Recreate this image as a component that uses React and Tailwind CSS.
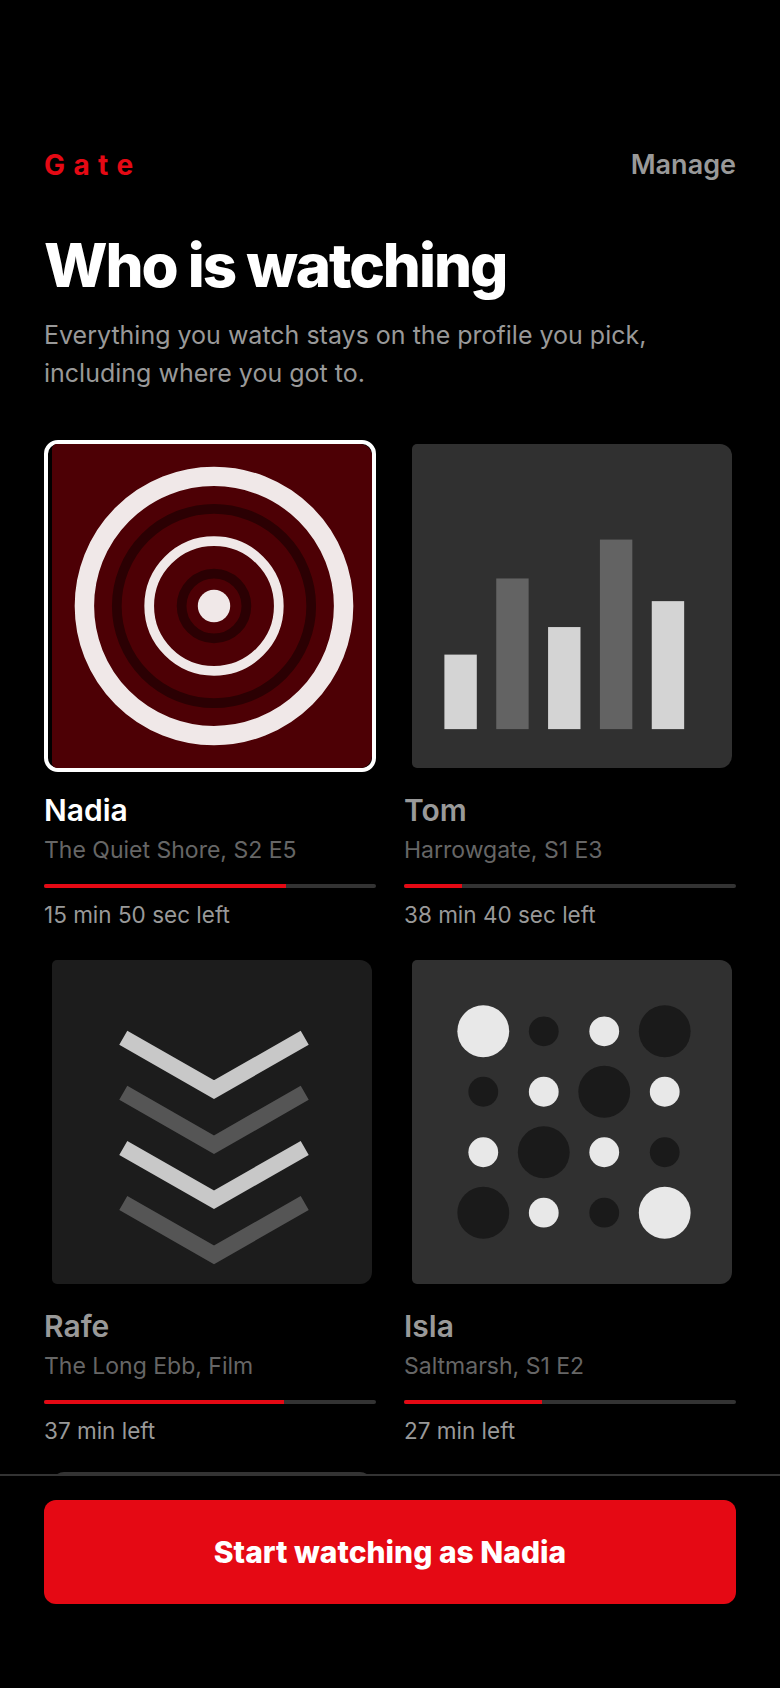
const profiles = [
  { name: 'Nadia', show: 'The Quiet Shore, S2 E5', left: '15 min 50 sec left', pct: '72.8%', art: 'rings', selected: true },
  { name: 'Tom', show: 'Harrowgate, S1 E3', left: '38 min 40 sec left', pct: '17.4%', art: 'bars' },
  { name: 'Rafe', show: 'The Long Ebb, Film', left: '37 min left', pct: '72.4%', art: 'chevrons' },
  { name: 'Isla', show: 'Saltmarsh, S1 E2', left: '27 min left', pct: '41.6%', art: 'dots' },
];

const Rings = () => (
  <svg viewBox="0 0 200 200" className="block w-[324px] h-[324px] bg-[#4d0005]" fill="none">
    <circle cx="100" cy="100" r="80" stroke="#f0e8e8" strokeWidth="12" />
    <circle cx="100" cy="100" r="60" stroke="#2b0003" strokeWidth="6" />
    <circle cx="100" cy="100" r="40" stroke="#f0e8e8" strokeWidth="6" />
    <circle cx="100" cy="100" r="20" stroke="#2b0003" strokeWidth="6" />
    <circle cx="100" cy="100" r="10" fill="#f0e8e8" />
  </svg>
);

const Bars = () => (
  <svg viewBox="0 0 200 200" className="block w-[324px] h-[324px] bg-[#303030]">
    <rect x="20" y="130" width="20" height="46" fill="#d4d4d4" />
    <rect x="52" y="83" width="20" height="93" fill="#636363" />
    <rect x="84" y="113" width="20" height="63" fill="#d4d4d4" />
    <rect x="116" y="59" width="20" height="117" fill="#636363" />
    <rect x="148" y="97" width="20" height="79" fill="#d4d4d4" />
  </svg>
);

const Chevrons = () => (
  <svg viewBox="0 0 200 200" className="block w-[324px] h-[324px] bg-[#1c1c1c]" fill="none" strokeWidth="10">
    <path d="M44 48 L100 80 L156 48" stroke="#c8c8c8" />
    <path d="M44 82 L100 114 L156 82" stroke="#555555" />
    <path d="M44 116 L100 148 L156 116" stroke="#c8c8c8" />
    <path d="M44 150 L100 182 L156 150" stroke="#555555" />
  </svg>
);

// [light?, big?] per cell, four by four
const dots = [
  [[1, 1], [0, 0], [1, 0], [0, 1]],
  [[0, 0], [1, 0], [0, 1], [1, 0]],
  [[1, 0], [0, 1], [1, 0], [0, 0]],
  [[0, 1], [1, 0], [0, 0], [1, 1]],
];

const Dots = () => (
  <svg viewBox="0 0 200 200" className="block w-[324px] h-[324px] bg-[#303030]">
    {dots.map((row, y) =>
      row.map(([light, big], x) => (
        <circle
          key={`${x}-${y}`}
          cx={44 + (x * 112) / 3}
          cy={44 + (y * 112) / 3}
          r={big ? 16 : 9.2}
          fill={light ? '#e8e8e8' : '#1a1a1a'}
        />
      ))
    )}
  </svg>
);

const arts = { rings: Rings, bars: Bars, chevrons: Chevrons, dots: Dots };

const ProfileCard = ({ profile }) => {
  const Art = arts[profile.art];
  return (
    <div className="flex flex-col">
      <div className={`h-[332px] rounded-[14px] border-4 ${profile.selected ? 'border-white' : 'border-transparent'}`}>
        <div className="ml-1 h-[324px] overflow-hidden rounded-r-[12px] rounded-l-[5px]">
          <Art />
        </div>
      </div>
      <p className={`mt-[19px] text-[30px] leading-[38px] font-semibold ${profile.selected ? 'text-white' : 'text-[#999999]'}`}>
        {profile.name}
      </p>
      <p className="mt-[5px] text-[23px] leading-[32px] text-[#666666]">{profile.show}</p>
      <div className="mt-[18px] h-1 rounded-full bg-[#333333] overflow-hidden">
        <div className="h-full bg-[#e50914]" style={{ width: profile.pct }} />
      </div>
      <p className="mt-[12px] text-[22.5px] leading-[30px] text-[#999999]">{profile.left}</p>
    </div>
  );
};

export default function App() {
  return (
    <div className="h-[1688px] bg-black flex flex-col font-['Inter',sans-serif] overflow-hidden">
      <div className="h-[1474px] overflow-hidden px-[44px] pt-[145px] shrink-0">
        <div className="flex items-center justify-between h-[40px]">
          <span className="text-[28px] font-bold tracking-[0.3em] text-[#e50914]">Gate</span>
          <span className="text-[27px] font-semibold text-[#999999]">Manage</span>
        </div>
        <h1 className="mt-[44px] text-[60px] leading-[72px] font-extrabold tracking-[-0.034em] text-white">Who is watching</h1>
        <p className="mt-[15px] text-[25px] leading-[38px] text-[#999999]">
          Everything you watch stays on the profile you pick,
          <br />
          including where you got to.
        </p>
        <div className="mt-[48px] grid grid-cols-2 gap-x-[28px] gap-y-[26px]">
          {profiles.map((p) => (
            <ProfileCard key={p.name} profile={p} />
          ))}
          <div className="-mt-1 h-[332px] border-4 border-transparent">
            <div className="ml-1 h-[324px] rounded-[12px] bg-[#333333]" />
          </div>
        </div>
      </div>
      <div className="flex-1 border-t-2 border-[#333333] px-[44px] pt-[24px]">
        <button className="w-full h-[104px] rounded-[12px] bg-[#e50914] text-white text-[30px] font-extrabold">
          Start watching as Nadia
        </button>
      </div>
    </div>
  );
}
